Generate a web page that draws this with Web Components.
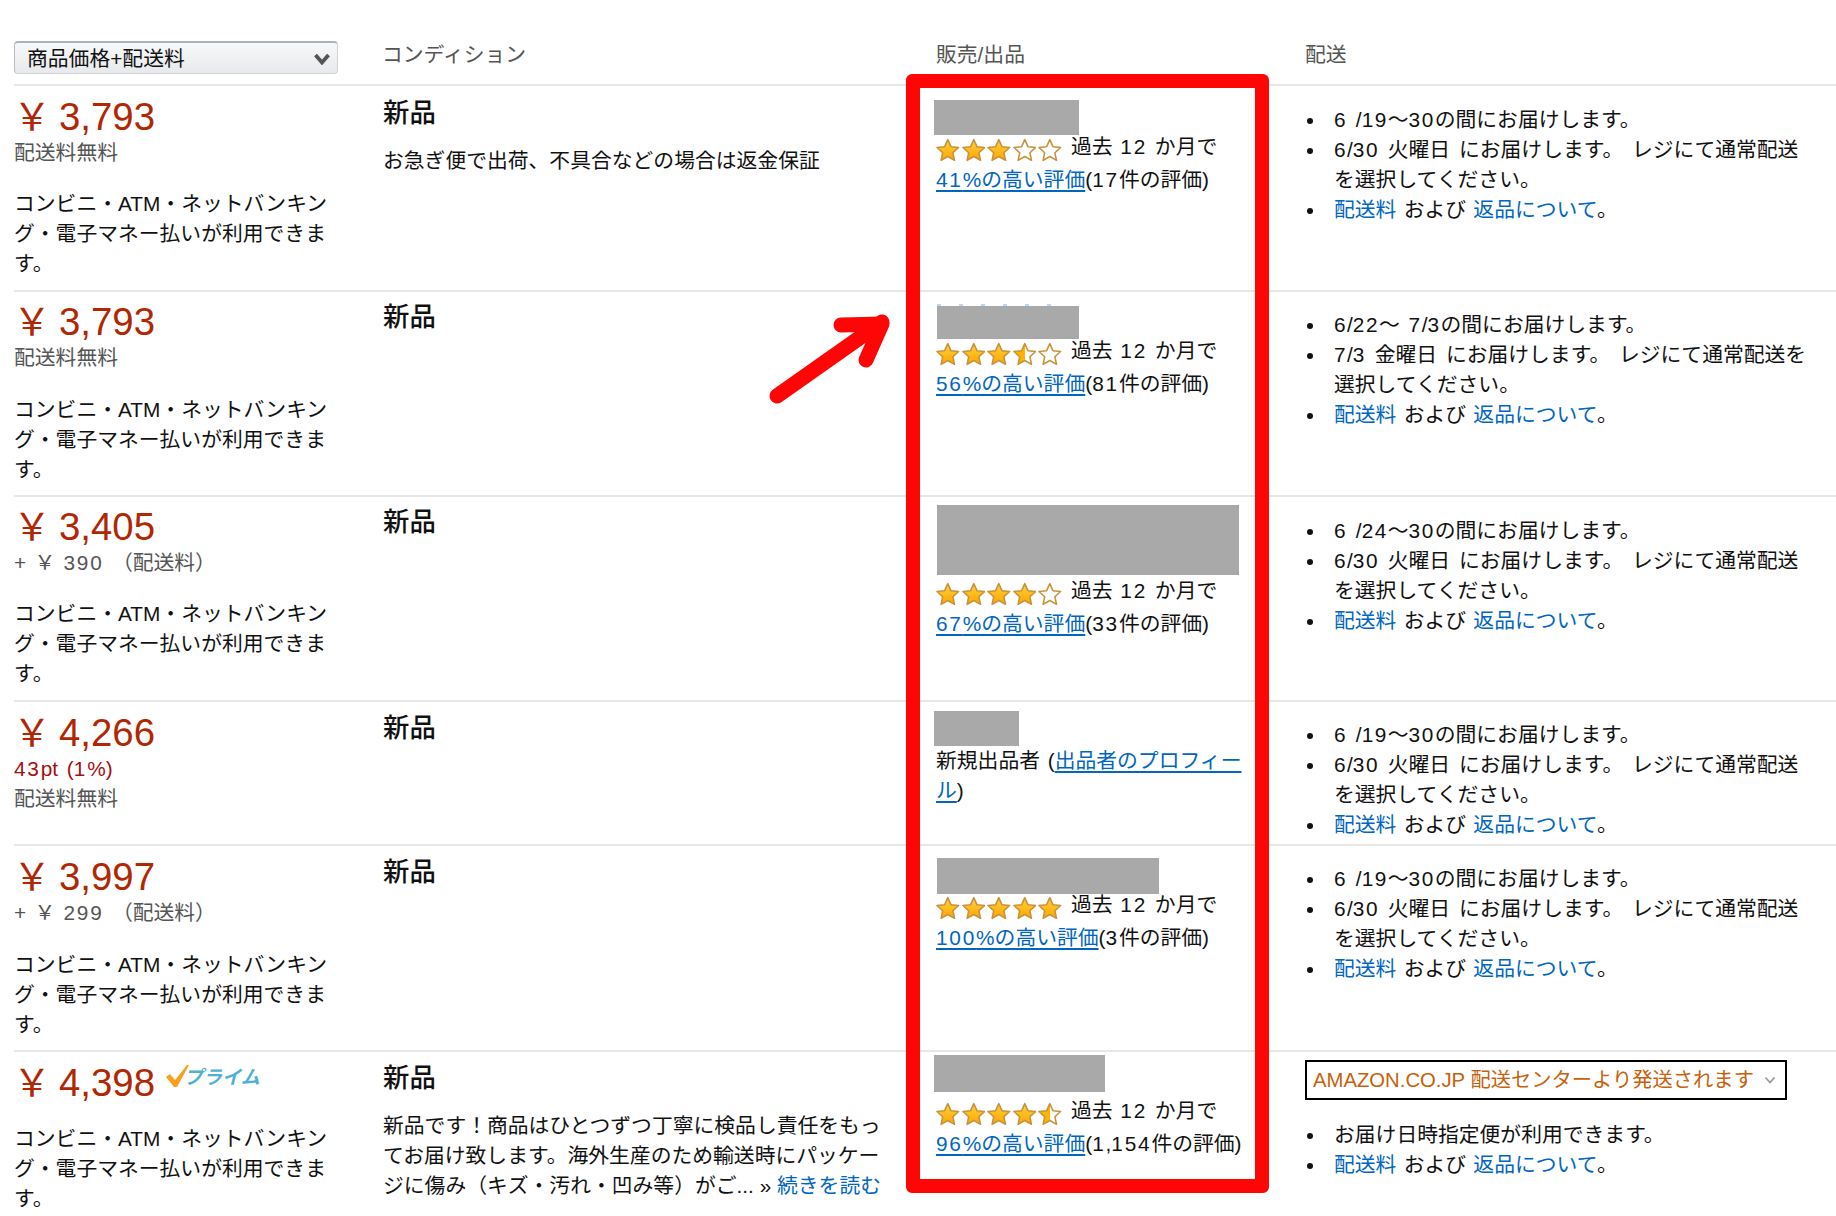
<!DOCTYPE html>
<html lang="ja">
<head>
<meta charset="utf-8">
<title>出品一覧</title>
<style>
    html, body { margin: 0; height: 1216px; overflow: hidden; background: #fff; }
    body {
        font-family: "Liberation Sans", "Noto Sans CJK JP", sans-serif;
        font-size: 20.8px;
        line-height: 30px;
        color: #111;
    }
</style>
</head>
<body>
<offer-table>
    <offer-row h="206">
        <price-cell slot="price" price="3,793" note="配送料無料" pay></price-cell>
        <condition-cell slot="condition" top="9">お急ぎ便で出荷、不具合などの場合は返金保証</condition-cell>
        <seller-cell slot="seller" x="-2" top="14" w="145" h="35" gap="-3" stars="3" pct="41" count="17件"></seller-cell>
        <ship-cell slot="ship" top="19" first="6 /19〜30の間にお届けします。" second="6/30 火曜日 にお届けします。 レジにて通常配送を選択してください。"></ship-cell>
    </offer-row>
    <offer-row h="205">
        <price-cell slot="price" top="9" paygap="22" price="3,793" note="配送料無料" pay></price-cell>
        <condition-cell slot="condition" top="7"></condition-cell>
        <seller-cell slot="seller" x="1" top="14" w="142" h="33" gap="-3" stars="3.5" pct="56" count="81件" ghost></seller-cell>
        <ship-cell slot="ship" first="6/22〜 7/3の間にお届けします。" second="7/3 金曜日 にお届けします。 レジにて通常配送を選択してください。"></ship-cell>
    </offer-row>
    <offer-row h="205">
        <price-cell slot="price" top="9" price="3,405" note="+ ￥ 390 （配送料）" pay></price-cell>
        <condition-cell slot="condition" top="7"></condition-cell>
        <seller-cell slot="seller" x="1" top="8" w="302" h="70" gap="1" stars="4" pct="67" count="33件"></seller-cell>
        <ship-cell slot="ship" top="19" first="6 /24〜30の間にお届けします。" second="6/30 火曜日 にお届けします。 レジにて通常配送を選択してください。"></ship-cell>
    </offer-row>
    <offer-row h="144">
        <price-cell slot="price" price="4,266" pt="43pt (1%)" note="配送料無料"></price-cell>
        <condition-cell slot="condition"></condition-cell>
        <seller-cell slot="seller" x="-2" top="9" w="85" h="35" gap="0" newseller></seller-cell>
        <ship-cell slot="ship" first="6 /19〜30の間にお届けします。" second="6/30 火曜日 にお届けします。 レジにて通常配送を選択してください。"></ship-cell>
    </offer-row>
    <offer-row h="206">
        <price-cell slot="price" paygap="22" price="3,997" note="+ ￥ 299 （配送料）" pay></price-cell>
        <condition-cell slot="condition"></condition-cell>
        <seller-cell slot="seller" x="1" top="12" w="222" h="36" gap="-4" stars="5" pct="100" count="3件"></seller-cell>
        <ship-cell slot="ship" first="6 /19〜30の間にお届けします。" second="6/30 火曜日 にお届けします。 レジにて通常配送を選択してください。"></ship-cell>
    </offer-row>
    <offer-row h="180">
        <price-cell slot="price" paygap="20" price="4,398" prime pay></price-cell>
        <condition-cell slot="condition">新品です！商品はひとつずつ丁寧に検品し責任をもってお届け致します。海外生産のため輸送時にパッケージに傷み（キズ・汚れ・凹み等）がご... » <jp-link>続きを読む</jp-link></condition-cell>
        <seller-cell slot="seller" x="-2" top="3" w="171" h="37" gap="4" stars="4.5" pct="96" count="1,154件"></seller-cell>
        <ship-cell slot="ship" top="20" amazon></ship-cell>
    </offer-row>
</offer-table>

<script>
const LINK_COLOR = '#0066c0';

// 数字だけ少し広げる
const nums = (text) => text.replace(/[0-9]+/g, (m) => `<span class="n">${m}</span>`);

class JpLink extends HTMLElement {
    constructor() {
        super();
        this.attachShadow({ mode: 'open' });
    }

    connectedCallback() {
        const line = this.hasAttribute('underline') ? 'underline' : 'none';
        this.shadowRoot.innerHTML = `<style>
                :host { display: inline; }
                a { color: ${LINK_COLOR}; text-decoration: ${line}; text-underline-offset: 3px; text-decoration-thickness: 2px; }
            </style><a href="#"><slot></slot></a>`;
    }
}

class OfferTable extends HTMLElement {
    constructor() {
        super();
        this.attachShadow({ mode: 'open' });
    }

    connectedCallback() {
        this.shadowRoot.innerHTML = `
            <style>
                :host { display: block; position: relative; height: 1216px; padding-left: 14px; overflow: hidden; }
                .head {
                    display: grid;
                    grid-template-columns: 369px 553px 368px 1fr;
                    height: 84px;
                    box-sizing: border-box;
                    padding-top: 41px;
                    color: #555;
                }
                .sort {
                    display: flex;
                    align-items: center;
                    justify-content: space-between;
                    box-sizing: border-box;
                    width: 324px;
                    height: 33px;
                    padding: 2px 7px 0 12px;
                    border: 1px solid #d0d2d6;
                    border-top: 2px solid #aeb2b8;
                    border-left-color: #b9bcc2;
                    border-radius: 4px;
                    background: linear-gradient(#f7f8fa, #e7e9ec);
                    color: #111;
                    line-height: 28px;
                }
                .label { line-height: 28px; margin-left: -1px; }
                .overlay { position: absolute; pointer-events: none; }
                .frame {
                    left: 906px;
                    top: 74px;
                    width: 363px;
                    height: 1119px;
                    box-sizing: border-box;
                    border: 14.5px solid #ff0606;
                    border-radius: 6px;
                }
                .arrow { left: 760px; top: 300px; }
            </style>
            <div class="head">
                <div class="sort">商品価格+配送料
                    <svg width="16" height="12" viewBox="0 0 16 12"><path d="M1.5 2 L8 9.5 L14.5 2" fill="none" stroke="#555" stroke-width="3.8"/></svg>
                </div>
                <div class="label">コンディション</div>
                <div class="label" style="padding-left:1px">販売/出品</div>
                <div class="label" style="padding-left:2px">配送</div>
            </div>
            <slot></slot>
            <div class="overlay frame"></div>
            <svg class="overlay arrow" width="140" height="110" viewBox="0 0 140 110">
                <path d="M17 96 L122 22" fill="none" stroke="#ff0606" stroke-width="15" stroke-linecap="round"/>
                <path d="M81 25 L122 24 L106 60" fill="none" stroke="#ff0606" stroke-width="15" stroke-linecap="round" stroke-linejoin="round"/>
            </svg>
        `;
    }
}

class OfferRow extends HTMLElement {
    constructor() {
        super();
        this.attachShadow({ mode: 'open' });
    }

    connectedCallback() {
        this.shadowRoot.innerHTML = `
            <style>
                :host {
                    display: grid;
                    grid-template-columns: 369px 553px 368px 1fr;
                    box-sizing: border-box;
                    height: ${this.getAttribute('h')}px;
                    border-top: 2px solid #e7e7e7;
                }
            </style>
            <slot name="price"></slot>
            <slot name="condition"></slot>
            <slot name="seller"></slot>
            <slot name="ship"></slot>
        `;
    }
}

class PriceCell extends HTMLElement {
    constructor() {
        super();
        this.attachShadow({ mode: 'open' });
    }

    connectedCallback() {
        const price = this.getAttribute('price');
        const note = this.getAttribute('note');
        const pt = this.getAttribute('pt');
        const top = this.getAttribute('top') || 10;
        const payGap = this.getAttribute('paygap') || 21;
        const prime = this.hasAttribute('prime') ? `
            <span class="prime">
                <svg width="25" height="24" viewBox="0 0 25 24"><path d="M1 13 L5 10 L10 16 L22 1 L24 1 L12 23 L9 23 Z" fill="#f7a11f"/></svg><i>プライム</i>
            </span>` : '';
        this.shadowRoot.innerHTML = `
            <style>
                :host { display: block; padding: ${top}px 0 0; }
                .price {
                    display: flex;
                    align-items: center;
                    height: 42px;
                    font-size: 38.4px;
                    line-height: 42px;
                    color: #b12704;
                }
                .yen { width: 46px; margin-left: -1px; flex: none; font-size: 38px; }
                .pt { color: #a50f0f; word-spacing: 3px; }
                .note { color: #555; word-spacing: 2.5px; }
                .n { letter-spacing: 1.8px; }
                .pay { margin-top: ${payGap}px; width: 318px; }
                .prime { display: flex; align-items: center; margin: -10px 0 0 10px; }
                .prime svg { margin-top: -4px; }
                .prime i {
                    margin-left: -6px;
                    font-size: 19px;
                    font-weight: 700;
                    line-height: 24px;
                    color: #4fb0d5;
                }
            </style>
            <div class="price"><span class="yen">￥</span>${price}${prime}</div>
            ${pt ? `<div class="pt">${nums(pt)}</div>` : ''}
            ${note ? `<div class="note">${nums(note)}</div>` : ''}
            ${this.hasAttribute('pay') ? '<div class="pay">コンビニ・ATM・ネットバンキング・電子マネー払いが利用できます。</div>' : ''}
        `;
    }
}

class ConditionCell extends HTMLElement {
    constructor() {
        super();
        this.attachShadow({ mode: 'open' });
    }

    connectedCallback() {
        const top = this.getAttribute('top') || 8;
        this.shadowRoot.innerHTML = `
            <style>
                :host { display: block; padding: ${top}px 0 0; }
                .title { font-size: 26.4px; font-weight: 500; line-height: 36px; color: #111; }
                .desc { margin-top: 15px; width: 505px; }
            </style>
            <div class="title">新品</div>
            <div class="desc"><slot></slot></div>
        `;
    }
}

class StarRating extends HTMLElement {
    constructor() {
        super();
        this.attachShadow({ mode: 'open' });
    }

    connectedCallback() {
        const value = parseFloat(this.getAttribute('value'));
        const shape = 'M12 1.5 L15.2 8.6 L23 9.5 L17.2 14.8 L18.8 22.5 L12 18.6 L5.2 22.5 L6.8 14.8 L1 9.5 L8.8 8.6 Z';
        let stars = '';
        for (let i = 1; i <= 5; i++) {
            const fill = value >= i ? 'url(#gold)' : value >= i - 0.5 ? 'url(#half)' : '#fff';
            stars += `<svg width="23.6" height="24" viewBox="0 0 24 24"><path d="${shape}" fill="${fill}" stroke="#c8923a" stroke-width="1.6" stroke-linejoin="round"/></svg>`;
        }
        this.shadowRoot.innerHTML = `
            <style>
                :host { display: inline-flex; gap: 2px; vertical-align: -8px; margin-right: 9px; }
                svg { display: block; flex: none; }
                .defs { position: absolute; width: 0; height: 0; }
            </style>
            <svg class="defs" aria-hidden="true">
                <linearGradient id="gold" x1="0" y1="0" x2="0" y2="1">
                    <stop offset="0" stop-color="#ffd23c"/><stop offset="1" stop-color="#ffa500"/>
                </linearGradient>
                <linearGradient id="half" x1="0" y1="0" x2="1" y2="0">
                    <stop offset="0.5" stop-color="#ffb400"/><stop offset="0.5" stop-color="#fff"/>
                </linearGradient>
            </svg>
            ${stars}
        `;
    }
}

class SellerCell extends HTMLElement {
    constructor() {
        super();
        this.attachShadow({ mode: 'open' });
    }

    connectedCallback() {
        const a = (name) => this.getAttribute(name);
        const body = this.hasAttribute('newseller')
            ? `<div class="info">新規出品者 (<jp-link underline>出品者のプロフィール</jp-link>)</div>`
            : `<div class="info">
                    <div class="rate"><star-rating value="${a('stars')}"></star-rating>過去 <span class="n">12</span> か月で</div>
                    <div class="nowrap"><jp-link underline>${nums(a('pct'))}%の高い評価</jp-link>(${nums(a('count'))}の評価)</div>
               </div>`;
        this.shadowRoot.innerHTML = `
            <style>
                :host { display: block; padding-top: ${a('top')}px; }
                .mask {
                    width: ${a('w')}px;
                    height: ${a('h')}px;
                    margin-left: ${a('x')}px;
                    margin-bottom: ${a('gap')}px;
                    background: #a9a9a9;
                    position: relative;
                }
                :host([ghost]) .mask::before {
                    content: "";
                    position: absolute;
                    left: 0;
                    top: -2px;
                    width: 115px;
                    height: 2px;
                    background: repeating-linear-gradient(90deg, #bcd7ee 0 4px, transparent 4px 22px);
                }
                .info { width: 310px; word-spacing: 2px; }
                .rate { margin-bottom: 3px; }
                .nowrap { white-space: nowrap; word-spacing: 0; }
                .n { letter-spacing: 1.8px; }
            </style>
            <div class="mask"></div>
            ${body}
        `;
    }
}

class ShipCell extends HTMLElement {
    constructor() {
        super();
        this.attachShadow({ mode: 'open' });
    }

    connectedCallback() {
        const policy = '<li class="policy"><jp-link>配送料</jp-link> および <jp-link>返品について</jp-link>。</li>';
        const amazon = this.hasAttribute('amazon');
        const top = this.getAttribute('top') || 18;
        const items = amazon
            ? `<li>お届け日時指定便が利用できます。</li>${policy}`
            : `<li>${nums(this.getAttribute('first'))}</li><li>${nums(this.getAttribute('second'))}</li>${policy}`;
        this.shadowRoot.innerHTML = `
            <style>
                :host { display: block; padding: ${top}px 0 0; }
                ul { margin: 0; padding: 0 0 0 30px; width: 478px; list-style: none; word-spacing: 3px; }
                li::before {
                    content: "";
                    display: inline-block;
                    width: 6px;
                    height: 6px;
                    margin: 0 21px 0 -27px;
                    border-radius: 50%;
                    background: #111;
                    vertical-align: 3px;
                }
                .policy { word-spacing: 1.5px; }
                .n { letter-spacing: 1.5px; }
                .fc {
                    display: flex;
                    align-items: center;
                    justify-content: space-between;
                    box-sizing: border-box;
                    width: 482px;
                    height: 40px;
                    margin: -12px 0 20px 1px;
                    padding: 0 9px 0 6px;
                    border: 2px solid #000;
                    color: #c7610b;
                    white-space: nowrap;
                    font-size: 20.3px;
                }
            </style>
            ${amazon ? `<div class="fc">AMAZON.CO.JP 配送センターより発送されます
                <svg width="12" height="8" viewBox="0 0 12 8"><path d="M1.5 1.5 L6 6.5 L10.5 1.5" fill="none" stroke="#999" stroke-width="1.8"/></svg>
            </div>` : ''}
            <ul>${items}</ul>
        `;
    }
}

customElements.define('jp-link', JpLink);
customElements.define('star-rating', StarRating);
customElements.define('price-cell', PriceCell);
customElements.define('condition-cell', ConditionCell);
customElements.define('seller-cell', SellerCell);
customElements.define('ship-cell', ShipCell);
customElements.define('offer-row', OfferRow);
customElements.define('offer-table', OfferTable);
</script>
</body>
</html>
